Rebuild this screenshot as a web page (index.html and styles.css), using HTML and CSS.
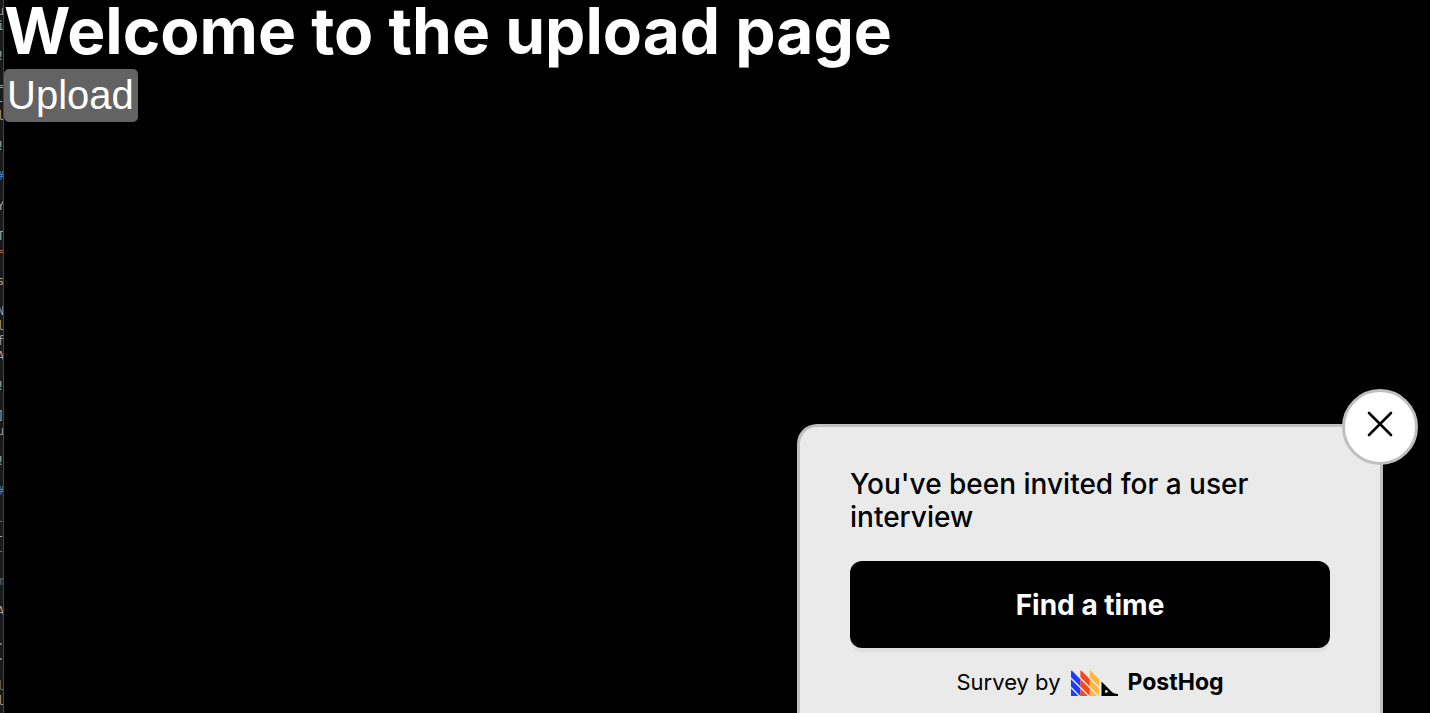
FILE: index.html
```html
<!DOCTYPE html>
<html lang="en">
<head>
<meta charset="utf-8">
<title>Upload</title>
<link rel="stylesheet" href="styles.css">
</head>
<body>
<div class="editor" aria-hidden="true"><pre class="code">u
i

!

=
-
l

!

<span class="blue">#</span>

Y

T
<span class="orange">=</span>

s

N
l
f
A

!

]
u

!

<span class="blue">#</span>

<span class="violet">-</span>
-
<span class="violet">-</span>

<span class="dim">m</span>

A

.
.

<span class="dim">l</span>
l
</pre></div>
<main class="page">
  <h1 class="title">Welcome to the upload page</h1>
  <button class="upload" type="button">Upload</button>
</main>
<section class="survey" aria-labelledby="question">
  <button class="close" type="button" aria-label="Close survey">
    <svg class="cross" viewBox="0 0 24 24"><path d="M1 1L23 23M23 1L1 23"/></svg>
  </button>
  <h2 class="question" id="question">You've been invited for a user interview</h2>
  <button class="schedule" type="button">Find a time</button>
  <a class="branding" href="#">
    <span>Survey by</span>
    <svg class="logo" viewBox="0 0 47 26" aria-hidden="true">
      <g fill="#1d3cff"><path d="M0 1.2Q0 0 1 .8L9.4 9.2V16.6L0 7.2Z"/><path d="M0 9.2L9.4 18.6V26L0 16.6Z"/><path d="M0 18.6L7.4 26H0Z"/></g>
      <g fill="#f9451c"><path d="M9.4 1.2Q9.4 0 10.4 .8L18.8 9.2V16.6L9.4 7.2Z"/><path d="M9.4 9.2L18.8 18.6V26L9.4 16.6Z"/><path d="M9.4 18.6L16.8 26H9.4Z"/></g>
      <g fill="#fbb83c"><path d="M18.8 1.2Q18.8 0 19.8 .8L28.2 9.2V16.6L18.8 7.2Z"/><path d="M18.8 9.2L28.2 18.6V26L18.8 16.6Z"/><path d="M18.8 18.6L26.2 26H18.8Z"/></g>
      <path d="M30.5 11.5L41.2 22.2Q43.2 23.6 47 24V26H30.5Z"/><circle cx="35.3" cy="21.5" r="1.4" fill="#eaeaea"/>
    </svg>
    <span class="brand">PostHog</span>
  </a>
</section>
</body>
</html>
```
FILE: styles.css
```css
body {
  display: flex;
  min-height: 100vh;
  margin: 0;
  overflow: hidden;
  background: #000;
  color: #fff;
  font-family: Inter, "Liberation Sans", sans-serif;
}

.editor {
  flex: none;
  width: 3px;
  height: 100vh;
  overflow: hidden;
  border-right: 1px solid #414344;
  background: #18191a;
}

.code {
  margin: 0 0 0 -3px;
  padding-top: 4px;
  color: #a0a0a0;
  font: 12px/15px "DejaVu Sans Mono", monospace;
}

.blue { color: #3f83b8; }
.orange { color: #a0694f; }
.violet { color: #5465b8; }
.dim { color: #666; }

.page {
  flex: 1;
}

.title {
  margin: 0;
  font-size: 64px;
  font-weight: 700;
  line-height: 62px;
}

.upload {
  display: block;
  margin: 7px 0 0;
  padding: 3px 4px 4px 3px;
  border: 0;
  border-radius: 5px;
  background: #636363;
  color: #fff;
  font: 40px/46px "Liberation Sans", Arial, sans-serif;
}

.survey {
  position: fixed;
  right: 47px;
  bottom: 0;
  box-sizing: border-box;
  width: 586px;
  max-width: 90vw;
  padding: 41px 50px 14px;
  border: 3px solid #c0bfbf;
  border-bottom: 0;
  border-radius: 20px 20px 0 0;
  background: #eaeaea;
  color: #000;
}

.close {
  position: absolute;
  top: -38px;
  right: -38px;
  display: flex;
  align-items: center;
  justify-content: center;
  width: 76px;
  height: 76px;
  padding: 0 0 6px;
  border: 3px solid #c0bfbf;
  border-radius: 50%;
  background: #fff;
}

.cross {
  width: 24px;
  height: 24px;
  fill: none;
  stroke: #000;
  stroke-width: 2.6;
  stroke-linecap: round;
  overflow: visible;
}

.question {
  margin: 0;
  font-size: 28px;
  font-weight: 500;
  line-height: 33px;
}

.schedule {
  width: 100%;
  margin-top: 27px;
  padding: 27px 26px 25px;
  border: 0;
  border-radius: 12px;
  background: #000;
  box-shadow: 0 4px 0 #e0e0e0;
  color: #fff;
  font: 700 28px/35px Inter, sans-serif;
}

.branding {
  display: flex;
  align-items: center;
  justify-content: center;
  gap: 10px;
  margin-top: 18px;
  color: #000;
  font-size: 22px;
  line-height: 33px;
  text-decoration: none;
}

.logo {
  width: 47px;
  height: 26px;
}

.brand {
  font-size: 23px;
  font-weight: 700;
}
```
